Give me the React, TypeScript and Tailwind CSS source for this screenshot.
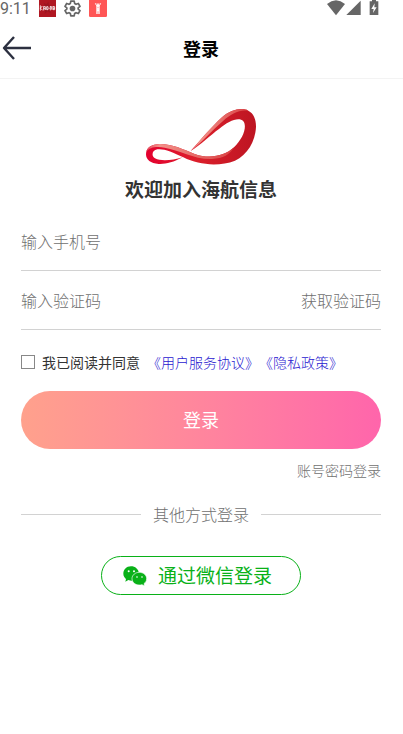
import { useState } from "react";

function StatusBar() {
  return (
    <div className="flex h-5 items-start justify-between overflow-hidden pr-6 text-[#666]">
      <div className="flex items-start">
        <span className="w-[39px] font-[Roboto,sans-serif] text-base leading-[17px]">9:11</span>
        <svg className="h-[17px] w-[17px]" viewBox="0 0 51 51">
          <path d="M0 0h51v51H0z" fill="#b01722" />
          <path d="M14 8l8 5 6-8 2 10 8 3-8 6 5 16-9-6-9 8 2-12-7-5 6-5z" fill="#8f1420" opacity=".6" />
          <path
            d="M4 16v16M4 25l6-7M5 25l6 6M14 19v12M14 20h5v10M14 26h5M23 20h4v9h-4zM29 25h3M34 18v13M34 20h4v9M42 18v12M42 20h5v9h-5M42 25h5"
            stroke="#fff"
            strokeWidth="2.4"
            fill="none"
          />
        </svg>
        <svg className="ml-2 h-[17px] w-[17px]" viewBox="0 0 24 24" fill="none" stroke="currentColor" strokeWidth="2.4">
          <path
            d="M9.6 1.5h4.8l.6 3.4 2 1.2 3.2-1.2 2.4 4.2L20 11.2v1.6l2.6 2.1-2.4 4.2-3.2-1.2-2 1.2-.6 3.4H9.6L9 19.1l-2-1.2-3.2 1.2-2.400-4.200L4 12.800v-1.600L1.400 9.100l2.400-4.200L7 6.100l2-1.200z"
            strokeLinejoin="round"
          />
          <circle cx="12" cy="12" r="4" fill="currentColor" stroke="none" />
        </svg>
        <svg className="ml-2 h-[17px] w-[18px]" viewBox="0 0 54 51">
          <path d="M0 0h54v47q0 4-4 4H4q-4 0-4-4z" fill="#ff5656" />
          <g fill="none" stroke="#fff" strokeWidth="4">
            <path d="M19 10l4 7h8l4-7M24 10l3 5 3-5" strokeWidth="3" />
            <path d="M24 18h6v9h-6zM24 27v15M30 27v15M24 32h6" />
          </g>
        </svg>
      </div>
      <div className="flex items-start">
        <svg className="h-4 w-[18px]" viewBox="0 0 54 48" fill="currentColor">
          <path d="M0 12Q27-10 54 12L27 46z" />
        </svg>
        <svg className="ml-px h-4 w-[15px]" viewBox="0 0 45 48" fill="currentColor">
          <path d="M44 2v43H1z" />
        </svg>
        <svg className="ml-2 h-4 w-[10px]" viewBox="0 0 30 48" fill="currentColor">
          <path d="M9 0h12v4h7v41H2V4h7z" />
          <path d="M17 10L7 27h7l-2 12 11-17h-7z" fill="#fff" />
        </svg>
      </div>
    </div>
  );
}

function Logo() {
  return (
    <svg className="h-14 w-[110px]" viewBox="78 42 330 168" role="img" aria-label="海航信息">
      <defs>
        <linearGradient id="ribbon" x1="0" x2="1">
          <stop offset="0" stopColor="#e4002f" />
          <stop offset=".45" stopColor="#dc1f2b" />
          <stop offset="1" stopColor="#bd1522" />
        </linearGradient>
        <linearGradient id="shine" x1="0" x2="1">
          <stop offset="0" stopColor="#e4485a" />
          <stop offset=".15" stopColor="#f2938a" />
          <stop offset="1" stopColor="#d94042" />
        </linearGradient>
      </defs>
      <path
        d="M188 187C160 202 137 208 116 207C92 206 78 194 78 178C78 157 96 147 120 147C157 147 192 164 224 177C270 193 314 183 342 157C370 130 382 94 370 79C356 64 325 79 298 101C270 121 243 149 212 168C240 137 274 96 306 67C334 43 365 37 385 47C401 55 408 73 408 95C406 140 382 179 345 197C298 215 237 211 190 187C158 171 130 160 112 163C96 166 93 182 105 190C124 200 157 196 188 187Z"
        fill="url(#ribbon)"
      />
      <path
        d="M79 171C80 156 98 147 120 147C157 147 192 164 224 177C270 193 314 183 342 157C330 179 309 191 276 192C224 194 178 165 134 158C110 154 88 156 79 171Z"
        fill="url(#shine)"
      />
      <path
        d="M212 168C240 137 274 96 306 67C334 43 365 37 385 47C357 43 332 57 310 77C276 106 246 142 212 168Z"
        fill="url(#shine)"
      />
    </svg>
  );
}

function WechatIcon() {
  return (
    <svg className="h-5 w-6" viewBox="0 0 72 60" fill="#09b118">
      <path d="M24 1C10 1 1 11 1 23c0 7 4 12 8 16l-2 8 9-5c4 1 7 2 10 2h22V22C46 9 37 1 24 1z" />
      <path
        d="M49 19c-12 0-22 8-22 19s10 19 22 19c3 0 5 0 8-1l8 4-2-7c4-3 8-8 8-15 0-11-10-19-22-19z"
        stroke="#fff"
        strokeWidth="2"
      />
      <g fill="#fff">
        <circle cx="17" cy="16" r="3" />
        <circle cx="33" cy="16" r="3" />
        <circle cx="42" cy="33" r="2.5" />
        <circle cx="57" cy="33" r="2.5" />
      </g>
    </svg>
  );
}

export default function App() {
  const [phone, setPhone] = useState("");
  const [code, setCode] = useState("");
  const [agreed, setAgreed] = useState(false);

  return (
    <div className="min-h-screen bg-white font-['Noto_Sans_CJK_SC',sans-serif] text-[#333]">
      <StatusBar />

      <header className="grid h-[59px] grid-cols-[1fr_auto_1fr] items-center border-b border-[#f3f3f3] pr-px pb-[2px]">
        <button type="button" aria-label="返回" className="w-8 pl-[2px]">
          <svg className="h-6 w-[29px]" viewBox="0 0 29 24" fill="none" stroke="#2c3040" strokeWidth="2.4">
            <path d="M12 1L2 12l10 11M2 12h27" strokeLinejoin="round" />
          </svg>
        </button>
        <h1 className="text-lg font-bold text-black">登录</h1>
      </header>

      <main className="pt-[30px] pr-[22px] pl-[21px]">
        <div className="flex flex-col items-center">
          <Logo />
          <h2 className="mt-2 text-[19px] leading-8 font-bold">欢迎加入海航信息</h2>
        </div>

        <form onSubmit={(e) => e.preventDefault()}>
          <div className="mt-2 flex h-[58px] border-b border-[#d2d2d2]">
            <input
              type="tel"
              aria-label="输入手机号"
              placeholder="输入手机号"
              value={phone}
              onChange={(e) => setPhone(e.target.value)}
              className="min-w-0 flex-1 pb-px text-base font-light outline-none placeholder:text-[#707070]"
            />
          </div>
          <div className="flex h-[59px] border-b border-[#d2d2d2]">
            <input
              type="text"
              inputMode="numeric"
              aria-label="输入验证码"
              placeholder="输入验证码"
              value={code}
              onChange={(e) => setCode(e.target.value)}
              className="min-w-0 flex-1 pb-px text-base font-light outline-none placeholder:text-[#707070]"
            />
            <button type="button" className="text-base font-light text-[#707070]">
              获取验证码
            </button>
          </div>

          <div className="mt-[21px] flex h-[22px] items-center text-sm">
            <input
              id="agree"
              type="checkbox"
              checked={agreed}
              onChange={(e) => setAgreed(e.target.checked)}
              className="h-[14px] w-[14px] appearance-none border border-[#888] checked:bg-[#ff6b9c]"
            />
            <label htmlFor="agree" className="pl-[7px]">
              我已阅读并同意
            </label>
            <a href="#terms" className="pl-[7px] font-light text-[#2a20d0]">
              《用户服务协议》
            </a>
            <a href="#privacy" className="font-light text-[#2a20d0]">
              《隐私政策》
            </a>
          </div>

          <button
            type="submit"
            className="mt-[18px] h-[58px] w-full rounded-full bg-linear-to-r from-[#ffa18c] to-[#ff65ab] pb-[2px] text-lg text-white"
          >
            登录
          </button>
        </form>

        <div className="mt-[11px] flex justify-end">
          <a href="#password" className="text-sm font-light text-[#707070]">
            账号密码登录
          </a>
        </div>

        <div className="mt-[22px] flex items-center gap-3 text-base font-light text-[#707070]">
          <span className="h-px flex-1 bg-[#d2d2d2]" />
          其他方式登录
          <span className="h-px flex-1 bg-[#d2d2d2]" />
        </div>

        <button
          type="button"
          className="mx-auto mt-[30px] flex h-[39px] w-[200px] items-center gap-[11px] rounded-full border border-[#09b118] pl-[21px] text-[19px] whitespace-nowrap text-[#09b118]"
        >
          <WechatIcon />
          通过微信登录
        </button>
      </main>
    </div>
  );
}
